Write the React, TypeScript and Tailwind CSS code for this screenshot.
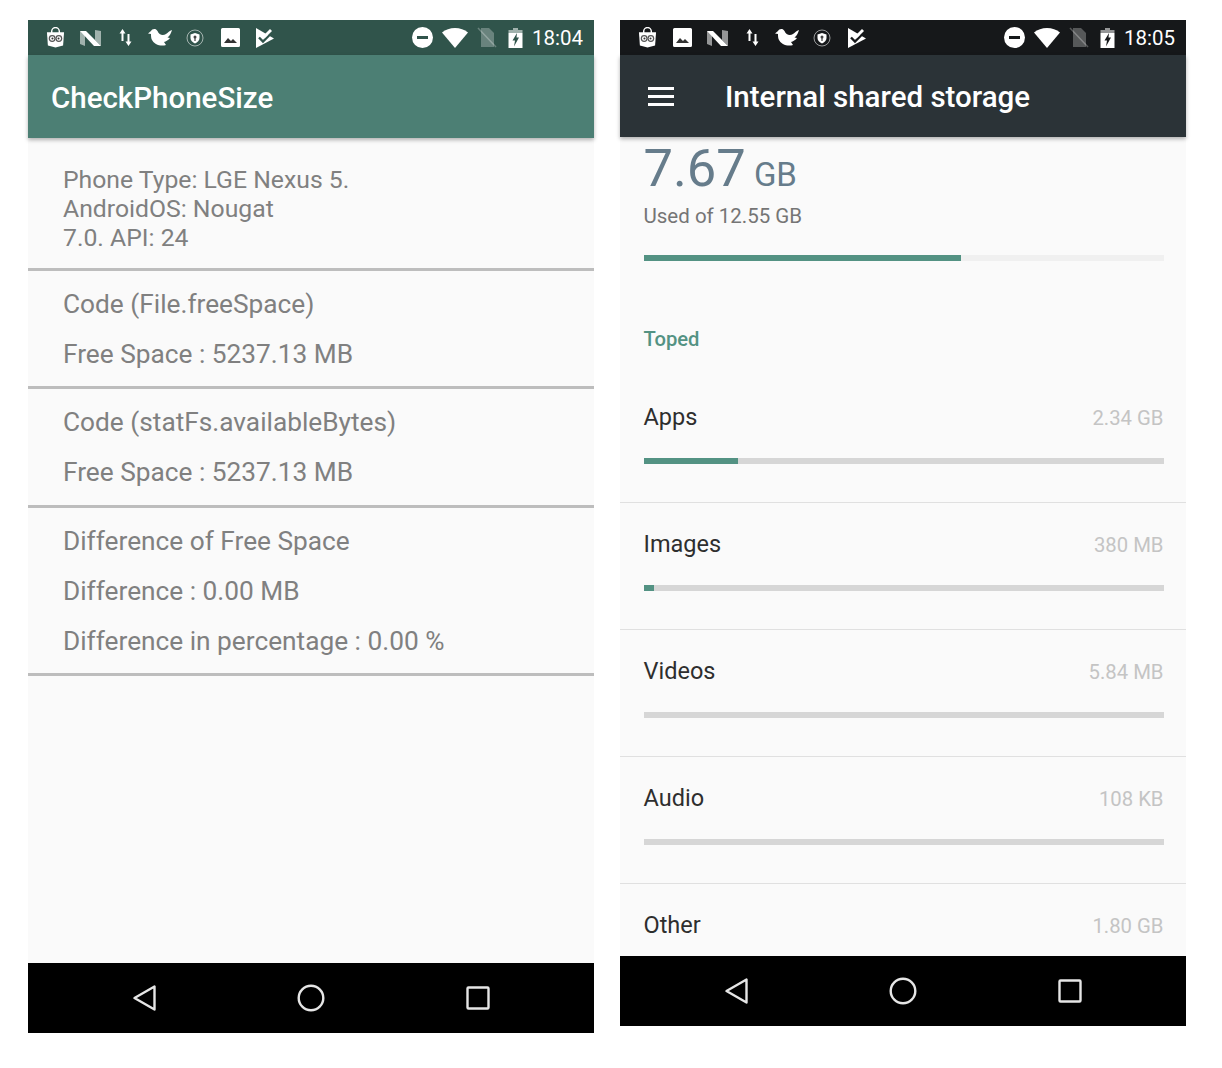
const font = { fontFamily: "Roboto, sans-serif" };

function Owl() {
  return (
    <svg width="19" height="22" viewBox="0 0 20 22">
      <path d="M6 6V4a4 4 0 0 1 8 0v2" fill="none" stroke="#fff" strokeWidth="1.5" />
      <path d="M1 5h18l-1 14-8 2-8-2z" fill="#fff" />
      <circle cx="6.5" cy="11.5" r="3.6" fill="#555" />
      <circle cx="13.5" cy="11.5" r="3.6" fill="#555" />
      <circle cx="6.5" cy="11.5" r="2.3" fill="#fff" />
      <circle cx="13.5" cy="11.5" r="2.3" fill="#fff" />
      <circle cx="6.8" cy="11.5" r="1.1" fill="#333" />
      <circle cx="13.2" cy="11.5" r="1.1" fill="#333" />
    </svg>
  );
}

function NLogo() {
  return (
    <svg width="21" height="16" viewBox="0 0 21 16">
      <path d="M0 1l5 2v13l-5-2z" fill="#fff" opacity="0.55" />
      <path d="M0 1h6l15 15h-7z" fill="#fff" />
      <path d="M15 0l6 1v15l-6-6z" fill="#fff" opacity="0.55" />
    </svg>
  );
}

function Arrows() {
  return (
    <svg width="15" height="19" viewBox="0 0 15 19">
      <path d="M4.500 1L1.500 5.500h2V13h2V5.500h2zM10.500 18l3-4.500h-2V6h-2v7.500h-2z" fill="#fff" />
    </svg>
  );
}

function Bird() {
  return (
    <svg width="24" height="19" viewBox="0 0 24 19">
      <path d="M3 3C4 .5 8 0 9.500 3 11 7 15 8 18 6c2-1.500 3.500-3 6-4-1 3-2 6-4.500 7.500L22 10c-1.500 2-4 3.500-6 4l2 3C13 18.500 6 17 3.500 11 3 9 3 7 3 6L0 5.500z" fill="#fff" />
    </svg>
  );
}

function Shield() {
  return (
    <svg width="18" height="18" viewBox="0 0 18 18">
      <circle cx="9" cy="9" r="8" fill="none" stroke="#fff" strokeOpacity="0.7" strokeWidth="0.8" />
      <path d="M9 4l4.500 1.500V9c0 2.500-2 4.500-4.500 5.500C6.500 13.500 4.500 11.500 4.500 9V5.500z" fill="#fff" />
      <circle cx="9" cy="8" r="1.500" fill="#444" />
      <rect x="8.400" y="9" width="1.200" height="3" fill="#444" />
    </svg>
  );
}

function Picture() {
  return (
    <svg width="19" height="19" viewBox="0 0 19 19">
      <path d="M1.500 0h16A1.500 1.500 0 0 1 19 1.500v16a1.500 1.500 0 0 1-1.500 1.500h-16A1.500 1.500 0 0 1 0 17.500v-16A1.500 1.500 0 0 1 1.500 0z" fill="#fff" />
      <path d="M3 15l4-5 3 3 2-2 4 4z" fill="#333" />
    </svg>
  );
}

function Check({ cut }: { cut: string }) {
  return (
    <svg width="19" height="20" viewBox="0 0 19 20">
      <path d="M0 0L18 10.500 0 20z" fill="#fff" />
      <path d="M3 9.500l4 4L15.500 5" fill="none" stroke={cut} strokeWidth="2.400" />
      <path d="M6.500 8.500L14 1l2 2-7.500 7.500z" fill="#fff" />
    </svg>
  );
}

function Dnd({ cut }: { cut: string }) {
  return (
    <svg width="21" height="21" viewBox="0 0 21 21">
      <circle cx="10.500" cy="10.500" r="10.500" fill="#fff" />
      <rect x="5" y="9" width="11" height="3" fill={cut} />
    </svg>
  );
}

function Wifi() {
  return (
    <svg width="26" height="20" viewBox="0 0 26 20">
      <path d="M13 20L0 4.500C3.500 1.700 8 0 13 0s9.500 1.700 13 4.500z" fill="#fff" />
    </svg>
  );
}

function NoSim() {
  return (
    <svg width="20" height="21" viewBox="0 0 20 21">
      <path d="M4 1h8l5 5v14H4z" fill="#fff" opacity="0.28" />
      <path d="M1 1l18 19" stroke="#fff" strokeOpacity="0.28" strokeWidth="1.500" />
    </svg>
  );
}

function Battery({ cut }: { cut: string }) {
  return (
    <svg width="15" height="20" viewBox="0 0 15 20">
      <path d="M5 0h5v2h4.500v3H.5V2H5z" fill="#fff" opacity="0.55" />
      <path d="M.5 5h14v15H.5z" fill="#fff" />
      <path d="M9 5L4.500 12.500H7l-1 6L11 9.500H8.500z" fill={cut} />
    </svg>
  );
}

function Slot({ children }: { children: React.ReactNode }) {
  return <div className="w-[35px] flex justify-center items-center">{children}</div>;
}

function StatusRight({ cut, time }: { cut: string; time: string }) {
  return (
    <div className="ml-auto mr-[11px] flex items-center">
      <Dnd cut={cut} />
      <div className="ml-[9px]"><Wifi /></div>
      <div className="ml-[9px]"><NoSim /></div>
      <div className="ml-[11px]"><Battery cut={cut} /></div>
      <span className="ml-[9px] text-[20.5px] leading-none pt-[2px]">{time}</span>
    </div>
  );
}

function NavBar() {
  return (
    <div className="h-[70px] bg-black shrink-0 flex items-center pl-[33.5px]">
      <div className="w-[167px] flex justify-center">
        <svg width="26" height="28" viewBox="0 0 26 28">
          <path d="M22.500 2.500v23L2.500 14z" fill="none" stroke="#e6e6e6" strokeWidth="2.400" strokeLinejoin="round" />
        </svg>
      </div>
      <div className="w-[165px] flex justify-center">
        <svg width="28" height="28" viewBox="0 0 28 28">
          <circle cx="14" cy="14" r="12.300" fill="none" stroke="#e6e6e6" strokeWidth="2.400" />
        </svg>
      </div>
      <div className="w-[169px] flex justify-center">
        <svg width="24" height="24" viewBox="0 0 24 24">
          <rect x="1.500" y="1.500" width="21" height="21" rx="1" fill="none" stroke="#e6e6e6" strokeWidth="2.400" />
        </svg>
      </div>
    </div>
  );
}

function Divider() {
  return <div className="h-[3px] bg-[#bdbdbd]" />;
}

function Left() {
  const cut = "#30544b";
  return (
    <div className="w-[566px] h-[1013px] flex flex-col bg-[#fafafa]">
      <div className="h-[35px] bg-[#30544b] shrink-0 flex items-center text-white pl-[9.5px]">
        <Slot><Owl /></Slot>
        <Slot><NLogo /></Slot>
        <Slot><Arrows /></Slot>
        <Slot><Bird /></Slot>
        <Slot><Shield /></Slot>
        <Slot><Picture /></Slot>
        <Slot><Check cut={cut} /></Slot>
        <StatusRight cut={cut} time="18:04" />
      </div>
      <div className="h-[83px] bg-[#4c7f74] shrink-0 flex items-center pl-[23px] pt-[5px] shadow-[0_2px_4px_rgba(0,0,0,0.3)] relative">
        <span className="text-white text-[29.5px] font-medium leading-none">CheckPhoneSize</span>
      </div>
      <div className="flex-1 text-[26.25px] text-[#808080]">
        <div className="pl-[35px] pt-[27px] h-[130px] leading-[29px] text-[24.75px]">
          <div>Phone Type: LGE Nexus 5.</div>
          <div>AndroidOS: Nougat</div>
          <div>7.0. API: 24</div>
        </div>
        <Divider />
        <div className="pl-[35px] h-[115px] pt-[18px] leading-[30px] flex flex-col gap-[20px]">
          <div>Code (File.freeSpace)</div>
          <div>Free Space : 5237.13 MB</div>
        </div>
        <Divider />
        <div className="pl-[35px] h-[116px] pt-[18px] leading-[30px] flex flex-col gap-[20px]">
          <div>Code (statFs.availableBytes)</div>
          <div>Free Space : 5237.13 MB</div>
        </div>
        <Divider />
        <div className="pl-[35px] h-[165px] pt-[18px] leading-[30px] flex flex-col gap-[20px]">
          <div>Difference of Free Space</div>
          <div>Difference : 0.00 MB</div>
          <div>Difference in percentage : 0.00 %</div>
        </div>
        <Divider />
      </div>
      <NavBar />
    </div>
  );
}

const rows = [
  { name: "Apps", size: "2.34 GB", pct: 18.1 },
  { name: "Images", size: "380 MB", pct: 2 },
  { name: "Videos", size: "5.84 MB", pct: 0 },
  { name: "Audio", size: "108 KB", pct: 0 },
  { name: "Other", size: "1.80 GB", pct: 0 },
];

function Right() {
  const cut = "#16181a";
  return (
    <div className="w-[566px] h-[1006px] flex flex-col bg-[#fafafa]">
      <div className="h-[35px] bg-[#16181a] shrink-0 flex items-center text-white pl-[9.5px]">
        <Slot><Owl /></Slot>
        <Slot><Picture /></Slot>
        <Slot><NLogo /></Slot>
        <Slot><Arrows /></Slot>
        <Slot><Bird /></Slot>
        <Slot><Shield /></Slot>
        <Slot><Check cut={cut} /></Slot>
        <StatusRight cut={cut} time="18:05" />
      </div>
      <div className="h-[82px] bg-[#2b3337] shrink-0 flex items-center shadow-[0_2px_4px_rgba(0,0,0,0.3)] relative">
        <div className="ml-[28px] w-[26px] flex flex-col gap-[5px]">
          <div className="h-[3px] bg-white" />
          <div className="h-[3px] bg-white" />
          <div className="h-[3px] bg-white" />
        </div>
        <span className="ml-[51px] pt-[3px] text-white text-[29.5px] font-medium leading-none">Internal shared storage</span>
      </div>
      <div className="flex-1 overflow-hidden min-h-0">
        <div className="pl-[23.5px] pr-[22.5px]">
          <div className="text-[#667c8b] leading-none flex items-baseline h-[57px] pt-[5px]">
            <span className="text-[52.5px]">7.67</span>
            <span className="text-[33px] ml-[8px]">GB</span>
          </div>
          <div className="text-[20.5px] leading-[24px] text-[#757575] mt-[10px]">Used of 12.55 GB</div>
          <div className="h-[6px] bg-[#f0f0f0] mt-[27px]">
            <div className="h-full bg-[#539283] w-[61%]" />
          </div>
          <div className="text-[20.2px] leading-[24px] font-medium text-[#539283] mt-[66px]">Toped</div>
        </div>
        <div className="mt-[25px]">
          {rows.map((r) => (
            <div key={r.name} className="h-[127px] border-b border-[#e0e0e0] pl-[23.5px] pr-[22.5px] pt-[26px]">
              <div className="flex justify-between items-center h-[32px]">
                <span className="text-[23.5px] text-[#2e2e2e]">{r.name}</span>
                <span className="text-[20.3px] text-[#c4c4c4]">{r.size}</span>
              </div>
              <div className="h-[6px] bg-[#d6d6d6] mt-[24px]">
                <div className="h-full bg-[#539283]" style={{ width: `${r.pct}%` }} />
              </div>
            </div>
          ))}
        </div>
      </div>
      <NavBar />
    </div>
  );
}

export default function App() {
  return (
    <div className="w-[1222px] h-[1068px] bg-white flex gap-[26px] pl-[28px] pt-[20px] overflow-hidden" style={font}>
      <Left />
      <Right />
    </div>
  );
}
